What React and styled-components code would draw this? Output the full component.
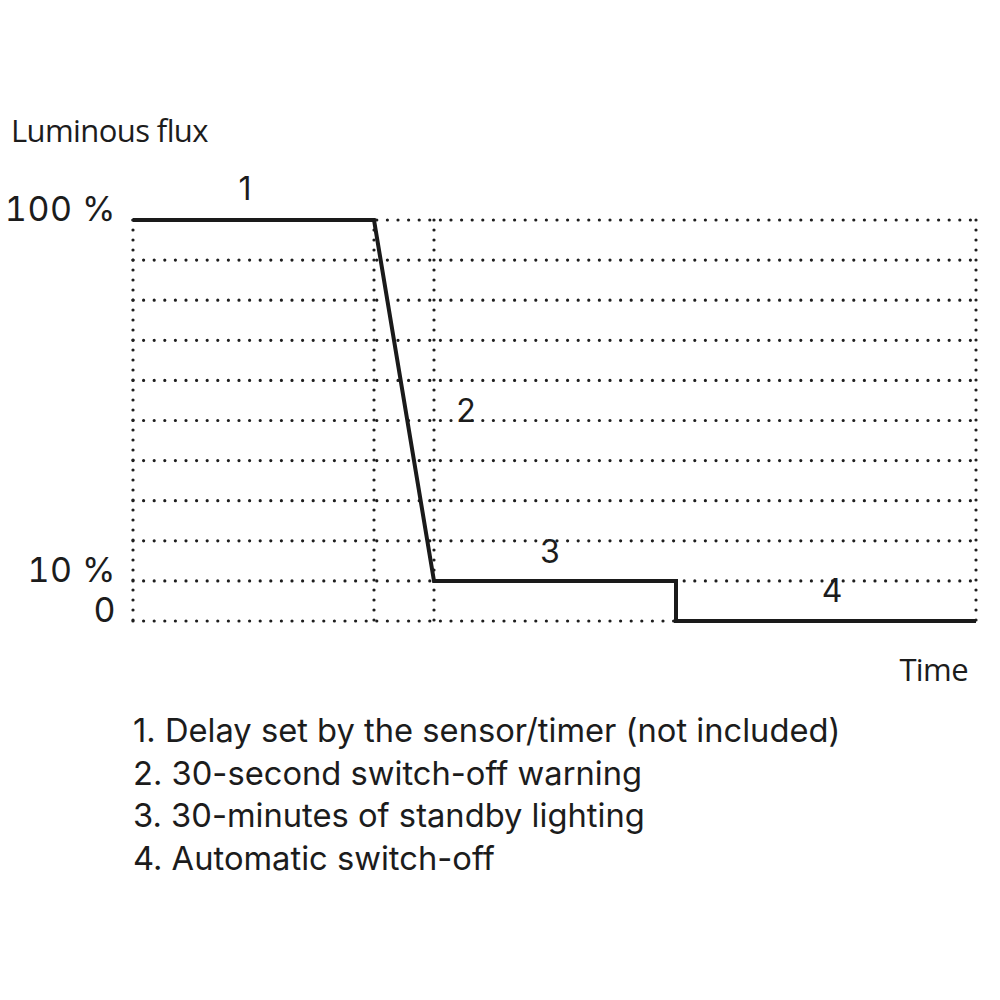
import React from 'react';
import styled, { createGlobalStyle } from 'styled-components';

const GlobalStyle = createGlobalStyle`
  html, body {
    margin: 0;
    padding: 0;
    background: #fff;
  }
`;

const GRID_LEFT = 133;
const GRID_RIGHT = 976;
const GRID_TOP = 220;
const ROW_STEP = 40.1;
const ROWS = 10;
const V_LINES = [133, 374, 434, 976];

const CURVE = '133,220 374,220 434,581 676,581 676,621 976,621';

const Y_LABELS = [
  { text: '100 %', y: 221 },
  { text: '10 %', y: 582 },
  { text: '0', y: 622 },
];

const SEGMENTS = [
  { text: '1', x: 245, y: 200 },
  { text: '2', x: 466, y: 422 },
  { text: '3', x: 550, y: 563 },
  { text: '4', x: 832, y: 602 },
];

const LEGEND = [
  '1. Delay set by the sensor/timer (not included)',
  '2. 30-second switch-off warning',
  '3. 30-minutes of standby lighting',
  '4. Automatic switch-off',
];

const App = () => {
  const rows = Array.from({ length: ROWS + 1 }, (_, i) => GRID_TOP + i * ROW_STEP);
  const bottom = rows[rows.length - 1];

  return (
    <Page>
      <GlobalStyle />
      <AxisTitle>Luminous flux</AxisTitle>
      <ChartSvg width="1000" height="493" viewBox="0 147 1000 493">
        {rows.map(y => (
          <DotLine key={`h${y}`} x1={GRID_LEFT} y1={y} x2={GRID_RIGHT} y2={y} $step={10.6} />
        ))}
        {V_LINES.map(x => (
          <DotLine key={`v${x}`} x1={x} y1={GRID_TOP} x2={x} y2={bottom} $step={10} />
        ))}
        <Curve points={CURVE} />
        {Y_LABELS.map(l => (
          <AxisValue key={l.text} x="116" y={l.y} textAnchor="end">
            {l.text}
          </AxisValue>
        ))}
        {SEGMENTS.map(s => (
          <SegmentNumber key={s.text} x={s.x} y={s.y} textAnchor="middle">
            {s.text}
          </SegmentNumber>
        ))}
      </ChartSvg>
      <TimeRow>
        <AxisTitle>Time</AxisTitle>
      </TimeRow>
      <Legend>
        {LEGEND.map(item => (
          <LegendItem key={item}>{item}</LegendItem>
        ))}
      </Legend>
    </Page>
  );
};

const Page = styled.div`
  width: 1000px;
  height: 1000px;
  box-sizing: border-box;
  padding: 114px 0 0 0;
  color: #1c1c1c;
  overflow: hidden;
`;

const AxisTitle = styled.div`
  font-family: 'Open Sans', 'Noto Sans', sans-serif;
  font-size: 31px;
  line-height: 33px;
  letter-spacing: -0.6px;
  padding-left: 11px;
`;

const ChartSvg = styled.svg`
  display: block;
`;

const DotLine = styled.line`
  stroke: #1e1e1e;
  stroke-width: 3.2;
  stroke-linecap: round;
  stroke-dasharray: ${p => `0 ${p.$step}`};
`;

const Curve = styled.polyline`
  fill: none;
  stroke: #1a1a1a;
  stroke-width: 4;
  stroke-linejoin: miter;
`;

const AxisValue = styled.text`
  font-family: Inter, 'Liberation Sans', sans-serif;
  font-size: 34px;
  font-variant-numeric: tabular-nums;
  letter-spacing: 0.5px;
  fill: #1c1c1c;
`;

const SegmentNumber = styled.text`
  font-family: Inter, 'Liberation Sans', sans-serif;
  font-size: 32px;
  fill: #1c1c1c;
`;

const TimeRow = styled.div`
  display: flex;
  justify-content: flex-end;
  padding-right: 32px;
  margin-top: 13px;
`;

const Legend = styled.ol`
  list-style: none;
  margin: 23px 0 0 0;
  padding: 0 0 0 133px;
  font-family: Inter, 'Liberation Sans', sans-serif;
  font-size: 32.7px;
  line-height: 42.5px;
`;

const LegendItem = styled.li`
  white-space: nowrap;
`;

export default App;
